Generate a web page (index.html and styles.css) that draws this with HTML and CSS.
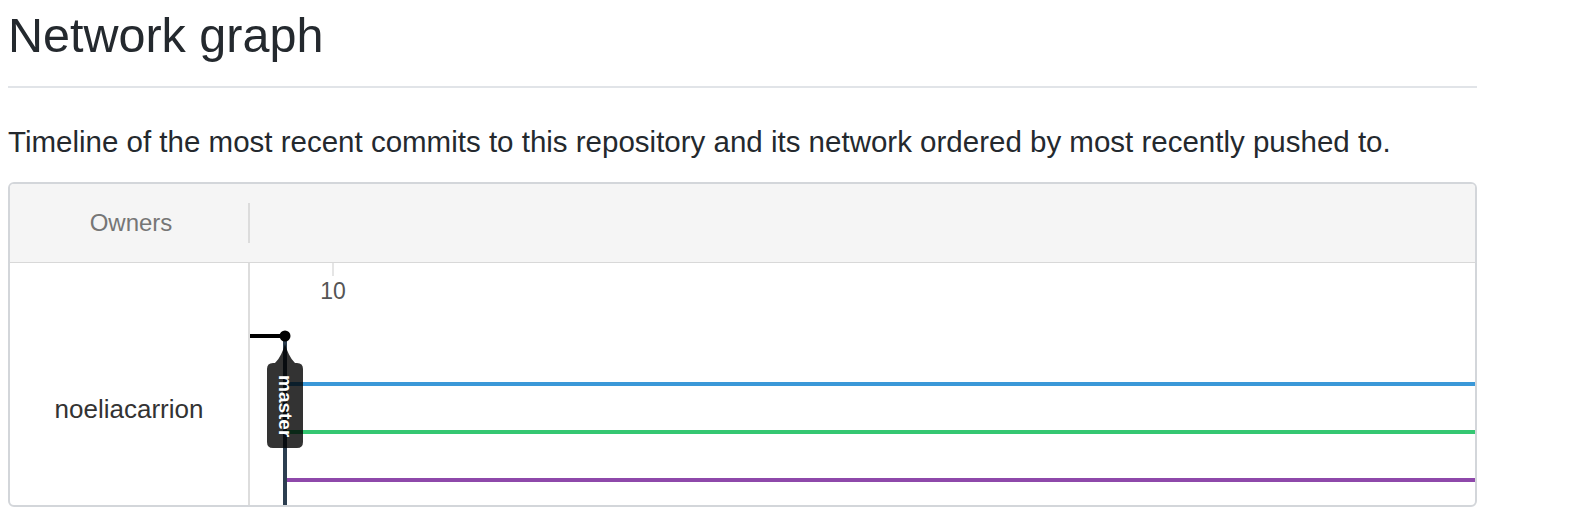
FILE: index.html
```html
<!DOCTYPE html>
<html>
<head>
<meta charset="utf-8">
<title>Network graph</title>
<link rel="stylesheet" href="styles.css">
</head>
<body>
<div class="page">
  <h2 class="subhead">Network graph</h2>
  <p class="lead">Timeline of the most recent commits to this repository and its network ordered by most recently pushed to.</p>
  <div class="network">
    <div class="network-head">
      <div class="owners-head">Owners</div>
      <div class="head-divider"></div>
      <div class="head-rest"></div>
    </div>
    <div class="network-body">
      <div class="owners-col">
        <div class="owner">noeliacarrion</div>
      </div>
      <div class="graph">
        <svg class="graph-svg" width="100%" height="100%">
          <line x1="83" y1="0" x2="83" y2="13" stroke="#dddddd" stroke-width="1.5"/>
          <text x="83" y="36" class="tick-label" text-anchor="middle">10</text>
          <line x1="35" y1="121" x2="100%" y2="121" stroke="#3a98d8" stroke-width="4"/>
          <line x1="35" y1="169" x2="100%" y2="169" stroke="#35c772" stroke-width="4"/>
          <line x1="35" y1="217" x2="100%" y2="217" stroke="#8e48aa" stroke-width="4"/>
          <line x1="0" y1="73" x2="35" y2="73" stroke="#000000" stroke-width="4"/>
          <line x1="35" y1="73" x2="35" y2="260" stroke="#2c3e50" stroke-width="4"/>
          <circle cx="35" cy="73" r="5.5" fill="#000000"/>
          <path d="M35 81 C37 88 40 95 45 100 L47 100 Q53 100 53 106 L53 179 Q53 185 47 185 L23 185 Q17 185 17 179 L17 106 Q17 100 23 100 L25 100 C30 95 33 88 35 81 Z" fill="rgba(0,0,0,0.8)"/>
          <text class="branch-label" transform="translate(28.5 112) rotate(90)">master</text>
        </svg>
      </div>
    </div>
  </div>
</div>
</body>
</html>
```
FILE: styles.css
```css
html, body {
  margin: 0;
  padding: 0;
  background: #ffffff;
}

body {
  font-family: "Liberation Sans", Arial, sans-serif;
  color: #24292e;
}

.page {
  width: 1469px;
  padding: 7px 0 0 8px;
}

.subhead {
  margin: 0;
  font-size: 48.5px;
  font-weight: 400;
  line-height: 56px;
  padding-bottom: 23px;
  border-bottom: 2px solid #e1e4e8;
}

.lead {
  margin: 34px 0 20px 0;
  font-size: 29.5px;
  line-height: 40px;
  color: #24292e;
}

.network {
  border: 2px solid #d3d6da;
  border-radius: 6px;
  overflow: hidden;
}

.network-head {
  display: flex;
  align-items: center;
  height: 78px;
  background: #f5f5f5;
  border-bottom: 1px solid #d8d8d8;
}

.owners-head {
  width: 238px;
  padding-left: 4px;
  box-sizing: border-box;
  text-align: center;
  font-size: 24px;
  color: #767676;
}

.head-divider {
  width: 2px;
  height: 40px;
  background: #dcdcdc;
}

.head-rest {
  flex: 1;
}

.network-body {
  display: flex;
  height: 242px;
}

.owners-col {
  flex: none;
  width: 240px;
  border-right: 2px solid #dddddd;
  padding-top: 131px;
  box-sizing: border-box;
}

.owner {
  text-align: center;
  font-size: 26px;
  line-height: 30px;
  color: #333333;
}

.graph {
  flex: 1;
  position: relative;
}

.graph-svg {
  display: block;
  overflow: visible;
}

.tick-label {
  font-family: "Liberation Sans", Arial, sans-serif;
  font-size: 23px;
  fill: #555555;
}

.branch-label {
  font-family: "Liberation Sans", Arial, sans-serif;
  font-size: 19px;
  font-weight: 700;
  fill: #ffffff;
}
```
